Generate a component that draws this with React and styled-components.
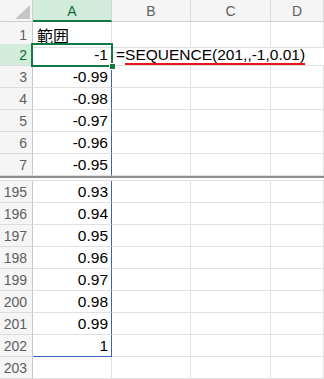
import React from 'react';
import styled, { createGlobalStyle, css } from 'styled-components';

const GlobalStyle = createGlobalStyle`
  html, body {
    margin: 0;
    padding: 0;
    background: #ffffff;
  }
  body {
    font-family: "Liberation Sans", Arial, sans-serif;
  }
`;

const GREEN = '#137a43';
const SPILL = '#3a64b4';
const GRID = '#e1e1e1';

const Sheet = styled.div`
  width: 324px;
  height: 379px;
  overflow: hidden;
  background: #fff;
  display: flex;
  flex-direction: column;
`;

const Row = styled.div`
  display: grid;
  grid-template-columns: 33px 79px 79px 80px 1fr;
  height: 22px;
  flex: none;
`;

const Corner = styled.div`
  background: #f5f5f5;
  border-right: 1px solid #cfcfcf;
  border-bottom: 1px solid #cfcfcf;
  display: flex;
  align-items: flex-end;
  justify-content: flex-end;
  padding: 0 2px 2px 0;
  box-sizing: border-box;
`;

const ColHead = styled.div`
  box-sizing: border-box;
  background: ${p => (p.$active ? '#d2ecdc' : '#f5f5f5')};
  color: ${p => (p.$active ? '#0f6a37' : '#5e5e5e')};
  border-right: 1px solid ${p => (p.$active ? '#c4dccd' : '#dadada')};
  border-bottom: ${p => (p.$active ? `2px solid ${GREEN}` : '1px solid #cfcfcf')};
  font-size: 14px;
  display: flex;
  align-items: center;
  justify-content: center;
  padding-top: ${p => (p.$active ? '1px' : '0')};
`;

const RowHead = styled.div`
  box-sizing: border-box;
  background: ${p => (p.$active ? '#d2ecdc' : '#f5f5f5')};
  color: ${p => (p.$active ? '#0f6a37' : '#5e5e5e')};
  border-right: 1px solid #c9c9c9;
  border-bottom: 1px solid #dcdcdc;
  font-size: 14px;
  display: flex;
  align-items: center;
  justify-content: flex-end;
  padding-right: 5px;
`;

const Cell = styled.div`
  box-sizing: border-box;
  position: relative;
  border-right: 1px solid ${p => (p.$spill ? SPILL : GRID)};
  border-bottom: 1px solid ${p => (p.$spillEnd ? SPILL : GRID)};
  font-size: 15.5px;
  color: #000;
  display: flex;
  align-items: center;
  justify-content: ${p => (p.$num ? 'flex-end' : 'flex-start')};
  padding: 1px 3px 0 3px;
  white-space: nowrap;
  ${p =>
    p.$span &&
    css`
      grid-column: ${p.$span};
      border-right: none;
      overflow: visible;
    `}
  ${p =>
    p.$selected &&
    css`
      &::after {
        content: '';
        position: absolute;
        left: -2px;
        top: -1px;
        right: -2px;
        bottom: -2px;
        border: 2px solid ${GREEN};
        pointer-events: none;
      }
    `}
`;

const FillHandle = styled.span`
  position: absolute;
  right: -5px;
  bottom: -5px;
  width: 5px;
  height: 5px;
  background: ${GREEN};
  border: 1px solid #fff;
  z-index: 2;
`;

const CjkText = styled.span`
  font-family: "Noto Sans CJK JP", "Noto Sans CJK SC", sans-serif;
  font-size: 16px;
  padding-left: 1px;
`;

const Formula = styled.span`
  padding-left: 1px;
`;

const Marked = styled.span`
  text-decoration-line: underline;
  text-decoration-color: #e8121b;
  text-decoration-thickness: 2px;
  text-underline-offset: 3px;
`;

const Gap = styled.div`
  flex: none;
  height: 5px;
  box-sizing: border-box;
  border-top: 2px solid #8e8e8e;
  border-bottom: 1px solid #e3e3e3;
  background: #fff;
`;

const CornerMark = () => (
  <svg width="15" height="14" viewBox="0 0 15 14">
    <polygon points="15,0 15,14 0,14" fill="#c6c6c6" />
  </svg>
);

const topRows = [
  { n: 2, v: '-1' },
  { n: 3, v: '-0.99' },
  { n: 4, v: '-0.98' },
  { n: 5, v: '-0.97' },
  { n: 6, v: '-0.96' },
  { n: 7, v: '-0.95' },
];

const bottomRows = [
  { n: 195, v: '0.93' },
  { n: 196, v: '0.94' },
  { n: 197, v: '0.95' },
  { n: 198, v: '0.96' },
  { n: 199, v: '0.97' },
  { n: 200, v: '0.98' },
  { n: 201, v: '0.99' },
  { n: 202, v: '1' },
];

const EmptyCells = () => (
  <>
    <Cell />
    <Cell />
    <Cell />
  </>
);

const App = () => (
  <>
    <GlobalStyle />
    <Sheet>
      <Row>
        <Corner>
          <CornerMark />
        </Corner>
        <ColHead $active>A</ColHead>
        <ColHead>B</ColHead>
        <ColHead>C</ColHead>
        <ColHead>D</ColHead>
      </Row>

      <Row>
        <RowHead>1</RowHead>
        <Cell>
          <CjkText>範囲</CjkText>
        </Cell>
        <EmptyCells />
      </Row>

      {topRows.map(r =>
        r.n === 2 ? (
          <Row key={r.n}>
            <RowHead $active>{r.n}</RowHead>
            <Cell $num $selected>
              {r.v}
              <FillHandle />
            </Cell>
            <Cell $span="3 / 6">
              <Formula>
                =<Marked>SEQUENCE(201,,-1,0.01)</Marked>
              </Formula>
            </Cell>
          </Row>
        ) : (
          <Row key={r.n}>
            <RowHead>{r.n}</RowHead>
            <Cell $num $spill>
              {r.v}
            </Cell>
            <EmptyCells />
          </Row>
        )
      )}

      <Gap />

      {bottomRows.map(r => (
        <Row key={r.n}>
          <RowHead>{r.n}</RowHead>
          <Cell $num $spill $spillEnd={r.n === 202}>
            {r.v}
          </Cell>
          <EmptyCells />
        </Row>
      ))}

      <Row>
        <RowHead>203</RowHead>
        <Cell />
        <EmptyCells />
      </Row>
    </Sheet>
  </>
);

export default App;
